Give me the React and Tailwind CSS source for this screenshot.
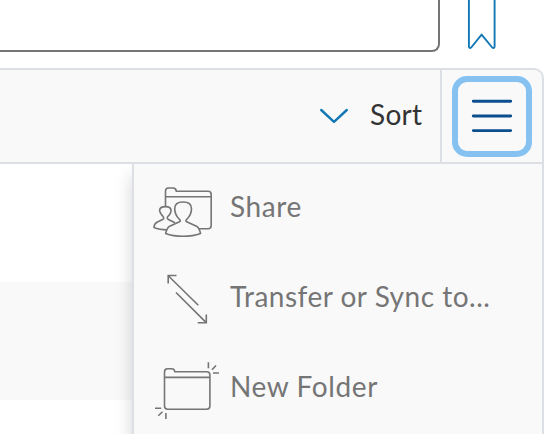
import React from "react";

function ShareIcon() {
  return (
    <svg className="h-[90px] w-[70px]" viewBox="150 164 70 90" fill="none" stroke="#757575" strokeWidth="1.6" strokeLinecap="round" strokeLinejoin="round">
      <path d="M165.5 206V191.2Q165.5 188 168.5 188H173Q176.2 188 176.2 191.3H208Q211.2 191.3 211.2 194.5V225.5Q211.2 228.8 208 228.8H199M165.5 196.8H211.2" />
      <path d="M168 230Q159 229.8 154 227.6Q154 223.8 157 222.2L162.6 219.6Q164.2 218.6 163.5 217Q159.6 213 159.6 210.3Q159.8 206.6 165.5 206.6Q171 206.6 171 210.3Q171.2 213.6 167.4 217Q166.8 218.6 168.4 219.5L174.5 222.5" />
      <path fill="#f9f9f9" d="M179.5 221.8Q181 220.7 179.5 219.3Q174.7 215 174.7 208.5Q174.7 202 183 202Q191.5 202 191.5 208.5Q191.5 215 186.7 219.3Q185.2 220.7 186.7 221.8L196.5 226.3Q199.2 227.6 200.6 233.5Q193 236.3 183 236.3Q173 236.3 165.6 233.5Q167 227.6 169.7 226.3Z" />
    </svg>
  );
}

function TransferIcon() {
  return (
    <svg className="h-[90px] w-[70px]" viewBox="150 254 70 90" fill="none" stroke="#757575" strokeWidth="1.6">
      <path d="M168 275.5L198.3 305.2M168.2 283.5V275.5H176.5M176 292.5L206 322.4M197.7 322.7H206.3V314.4" />
    </svg>
  );
}

function NewFolderIcon() {
  return (
    <svg className="h-[90px] w-[70px]" viewBox="150 344 70 90" fill="none" stroke="#757575" strokeWidth="1.6" strokeLinejoin="round">
      <path d="M164.5 372.2Q164.5 368.8 167.5 368.8H171.5Q174.7 368.8 174.7 371.8H206.7Q209.9 371.8 209.9 375V406Q209.9 409.2 206.7 409.2H167.7Q164.5 409.2 164.5 406ZM164.5 377.4H209.9" />
      <path d="M208.4 362.3V368.3M212 369.7L216 365.5M213 373H219M155 408.3H161.3M158.3 415.8L162.5 411.7M165.9 413V419" />
    </svg>
  );
}

function MenuItem({ icon, label, tracking }) {
  return (
    <li className="flex h-[90px] pl-4">
      {icon}
      <span className={`ml-2.5 whitespace-nowrap text-[28px] leading-[84px] text-[#757575] ${tracking}`}>{label}</span>
    </li>
  );
}

export default function App() {
  return (
    <div className="h-[434px] w-[558px] overflow-hidden bg-white font-['Lato',sans-serif]">
      <header className="flex h-[68px] items-start">
        <div className="h-[52px] w-[440px] rounded-br-lg border-r-2 border-b-2 border-[#757575]" />
        <svg className="ml-[26px] h-[52px] w-8" viewBox="466 0 32 52" fill="none" stroke="#1278b4" strokeWidth="1.9" strokeLinejoin="round">
          <path d="M468.9-3V46.5Q469.3 48.8 471.2 47.5L481.6 34.6L492.2 47.5Q494.4 48.8 494.6 46.5V-3" />
        </svg>
      </header>
      <div className="flex h-24 w-[544px] rounded-tr-[10px] border-t-2 border-r-2 border-b-2 border-[#dce0e5] bg-[#f9f9f9]">
        <div className="flex w-[440px] items-center">
          <svg className="ml-[318px] h-8 w-8" viewBox="318 100 32 32" fill="none" stroke="#1278b4" strokeWidth="2.4" strokeLinecap="round" strokeLinejoin="round">
            <path d="M321.2 110L334 121.8L346.8 110" />
          </svg>
          <span className="ml-5 pb-1 text-[28px] leading-none tracking-[0.3px] text-[#333]">Sort</span>
        </div>
        <div className="flex flex-1 border-l-2 border-[#dce0e5] pt-[5.5px] pl-[9.5px]">
          <button className="flex h-[81px] w-[80px] items-center justify-center rounded-[15px] border-[6px] border-[#86c2f1]">
            <svg className="h-10 w-11" viewBox="470 96 44 40" stroke="#0b4f8e" strokeWidth="2.9" strokeLinecap="round">
              <path d="M473.3 101.3H510.7M473.3 116H510.7M473.3 130.6H510.7" />
            </svg>
          </button>
        </div>
      </div>
      <main className="flex h-[270px]">
        <div className="w-[132px] pt-[118px]">
          <div className="h-[118px] bg-[#f9f9f9]" />
        </div>
        <div className="w-[412px] border-r-2 border-l-2 border-[#dce0e5] bg-[#f9f9f9] shadow-[0_12px_16px_rgba(50,35,45,0.2)] [clip-path:inset(0_0_0_-30px)]">
          <ul>
            <MenuItem icon={<ShareIcon />} label="Share" tracking="tracking-[0.6px]" />
            <MenuItem icon={<TransferIcon />} label="Transfer or Sync to..." tracking="tracking-[0.5px]" />
            <MenuItem icon={<NewFolderIcon />} label="New Folder" tracking="tracking-[0.6px]" />
          </ul>
        </div>
      </main>
    </div>
  );
}
